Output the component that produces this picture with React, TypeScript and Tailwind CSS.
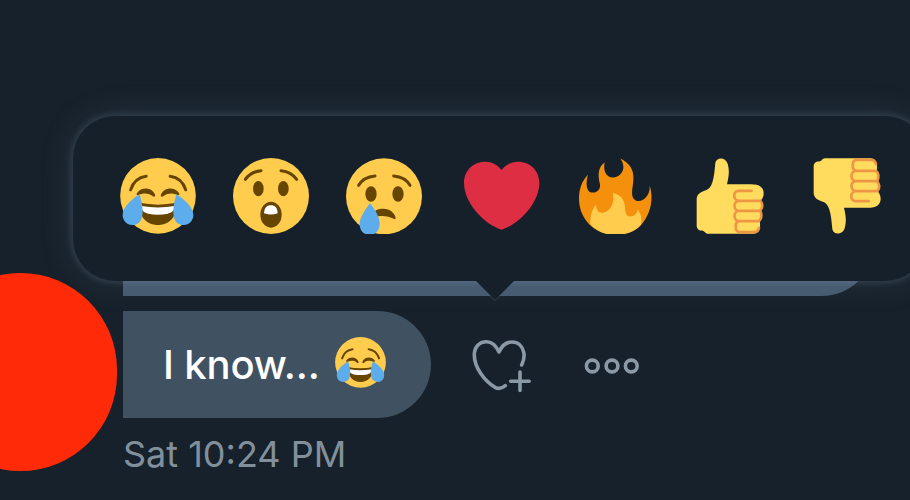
import type { ReactNode } from "react";

function Glyph({ viewBox, className = "h-[76px] w-[76px]", label, children }: { viewBox: string; className?: string; label: string; children: ReactNode }) {
  return (
    <svg viewBox={viewBox} className={`${className} shrink-0`} fill="none" role="img" aria-label={label}>
      {children}
    </svg>
  );
}

function Joy({ className }: { className?: string }) {
  return (
    <Glyph viewBox="59 54 229 229" className={className} label="Face with tears of joy">
      <circle cx="173.500" cy="168" r="114" fill="#FFCC4D" />
      <path d="M91 150C98 128 115 112 138 109M257 150C250 128 233 112 210 109" stroke="#664500" strokeWidth="9" strokeLinecap="round" />
      <path d="M110 160C120 141 155 139 165 165C166 172 160 172 156 168C142 158 128 160 116 165C110 167 107 164 110 160ZM237 160C227 141 192 139 182 165C181 172 187 172 191 168C205 158 219 160 231 165C237 167 240 164 237 160Z" fill="#664500" />
      <path d="M117 189Q173 200 230 189C232 232 207 256 173.500 256S115 232 117 189Z" fill="#664500" />
      <path d="M123 199Q173 207 224 199C224 214 212 220 203 222Q173 228 144 222C134 220 123 214 123 199Z" fill="#fff" />
      <path d="M118 163C98 176 67 199 67 226C67 242 79 256 96 256C127 256 136 223 118 163ZM229 163C249 176 280 199 280 226C280 242 268 256 251 256C220 256 211 223 229 163Z" fill="#5DADEC" />
    </Glyph>
  );
}

function Astonished() {
  return (
    <Glyph viewBox="401 54 228 228" label="Astonished face">
      <circle cx="515" cy="168" r="114" fill="#FFCC4D" />
      <path d="M438 118C448 104 464 94 485 92M592 118C582 104 566 94 545 92" stroke="#664500" strokeWidth="9" strokeLinecap="round" />
      <ellipse cx="477" cy="146" rx="16" ry="23" fill="#664500" />
      <ellipse cx="552" cy="146" rx="16" ry="23" fill="#664500" />
      <ellipse cx="515" cy="224" rx="32" ry="39" fill="#664500" />
      <path d="M494 220C495 203 503 196 515 196S534 203 535 220Q515 227 494 220Z" fill="#fff" />
    </Glyph>
  );
}

function Crying() {
  return (
    <Glyph viewBox="50 54 228 226" label="Crying face">
      <circle cx="164" cy="168" r="114" fill="#FFCC4D" />
      <path d="M88 135C98 118 114 109 137 107M242 135C232 118 216 109 193 107" stroke="#664500" strokeWidth="9" strokeLinecap="round" />
      <ellipse cx="125" cy="161" rx="17" ry="23" fill="#664500" />
      <ellipse cx="206" cy="161" rx="17" ry="23" fill="#664500" />
      <path d="M138 211C153 202 181 203 192 219C198 226 201 235 197 237C190 235 180 228 160 227C145 226 136 232 136 224Z" fill="#664500" />
      <path d="M122 188C109 207 91 230 91 251C91 272 105 284 121 284S151 271 151 250C151 229 136 207 122 188Z" fill="#5DADEC" />
    </Glyph>
  );
}

function Heart() {
  return (
    <Glyph viewBox="402 54 228 228" className="ml-[5px] h-[76px] w-[76px]" label="Red heart">
      <path d="M515 90C502 74 486 65 466 65C429 65 402 92 402 129C402 187 460 252 515 269C570 252 628 187 628 129C628 92 601 65 564 65C544 65 528 74 515 90Z" fill="#DD2E44" />
    </Glyph>
  );
}

function Fire() {
  return (
    <Glyph viewBox="51 54 228 227" label="Fire">
      <path d="M181 55C210 70 222 89 220 118C219 143 212 160 220 174C230 188 248 183 258 171C266 162 270 150 269 136C282 177 272 224 241 257C221 277 197 284 166 284C105 284 57 238 57 175C57 147 67 120 84 104C76 132 79 157 98 157C111 157 122 148 120 132C114 110 112 82 134 67C130 84 134 101 145 108C163 119 187 105 190 84C191 73 187 63 181 55Z" fill="#F4900C" />
      <path d="M158 158C182 164 194 178 195 202C196 215 197 229 211 229C224 229 233 220 232 207C243 220 247 236 243 254C224 276 195 284 166 284C137 284 109 273 91 252C90 228 96 207 108 193C109 211 115 220 131 217C149 213 166 191 158 158Z" fill="#FFCC4D" />
    </Glyph>
  );
}

function Hand({ down = false }: { down?: boolean }) {
  return (
    <Glyph viewBox="397 54 228 227" className={down ? "ml-1 h-[76px] w-[76px] -scale-y-100" : "ml-[2px] h-[76px] w-[76px]"} label={down ? "Thumbs down" : "Thumbs up"}>
      <path d="M467 68C470 51 497 49 504 71C511 96 506 112 502 132H573C601 132 612 142 612 160C612 171 606 178 604 181C614 191 610 206 602 211C609 224 606 237 600 242C604 261 599 280 581 281H445C437 281 435 272 427 271C417 272 411 265 411 256V177C411 160 426 154 439 150C457 144 463 120 467 68Z" fill="#FFDC5D" />
      <path d="M576 152H537C519 152 519 181 538 182H602M538 182C520 183 520 212 538 212H602M538 212C520 213 520 242 538 243H598M538 243C524 246 525 276 540 276H584C592 276 596 271 598 263M602 182C611 192 609 205 600 212M602 212C607 225 605 237 598 243" stroke="#EF9645" strokeWidth="8" strokeLinecap="round" strokeLinejoin="round" />
    </Glyph>
  );
}

function ReactionPicker() {
  return (
    <div className="absolute left-[73px] top-[116px] flex h-[165px] w-[854px] items-center gap-[37px] rounded-[42px] bg-[#15202a] pb-1.5 pl-[47px] shadow-[0_0_6px_2px_rgba(139,160,180,0.2),0_0_32px_4px_rgba(120,145,170,0.12)]">
      <Joy />
      <Astonished />
      <Crying />
      <Heart />
      <Fire />
      <Hand />
      <Hand down />
      <svg viewBox="0 0 40 22" className="absolute left-[402px] top-[164px] h-[22px] w-10" fill="none" aria-hidden="true">
        <path d="M0 0H40L20 20Z" fill="#15202a" />
        <path d="M15 16L20 20.500L25 16" stroke="#27333e" strokeWidth="1.500" />
      </svg>
    </div>
  );
}

export default function App() {
  return (
    <main className="relative h-[500px] w-[910px] overflow-hidden bg-[#17212b] font-['Inter','Liberation_Sans',sans-serif]">
      <div className="flex h-full flex-col pt-[189px]">
        <div className="ml-[123px] h-[107px] w-[752px] shrink-0 rounded-r-[54px] bg-[#465a70]" />

        <div className="-mt-[23px] flex shrink-0">
          <div className="-ml-[76px] h-[198px] w-[193px] shrink-0 rounded-full bg-[#ff2b08]" />
          <div className="ml-1.5 pt-[38px]">
            <div className="flex items-center">
              <div className="flex h-[107px] w-[308px] items-center rounded-r-[54px] bg-[#405261] pl-10">
                <span className="w-[172px] whitespace-nowrap text-[40px] font-medium leading-none tracking-[-0.15px] text-white">I know...</span>
                <Joy className="-mt-1 h-[51px] w-[51px]" />
              </div>

              <button className="ml-10 mt-[3px]" aria-label="Add reaction">
                <svg viewBox="0 0 60 56" className="h-14 w-[60px]" fill="none" stroke="#8b99a6" strokeWidth="3.600" strokeLinecap="round" strokeLinejoin="round">
                  <path d="M50.700 27C53 22 53.500 18 52.800 14.500C51.500 8 47 4 41 4C35 4 31 7.500 28 14C25 7.500 21 3.700 15.500 3.700C8 3.700 3.300 9.500 3.300 17C3.300 30 14 43 24 49.300C28 51.500 31 50.500 34.300 47.700" />
                  <path d="M49 34V52.500M39.700 43.200H58.200" />
                </svg>
              </button>
              <button className="ml-[53px] mt-[3px]" aria-label="More">
                <svg viewBox="0 0 56 18" className="h-[18px] w-14" fill="none" stroke="#8b99a6" strokeWidth="3.600">
                  <circle cx="8.300" cy="9" r="5.900" />
                  <circle cx="28" cy="9" r="5.900" />
                  <circle cx="47.300" cy="9" r="5.900" />
                </svg>
              </button>
            </div>
            <div className="mt-[18px] whitespace-nowrap text-[36px] leading-9 text-[#82909c]">Sat 10:24 PM</div>
          </div>
        </div>
      </div>

      <ReactionPicker />
    </main>
  );
}
